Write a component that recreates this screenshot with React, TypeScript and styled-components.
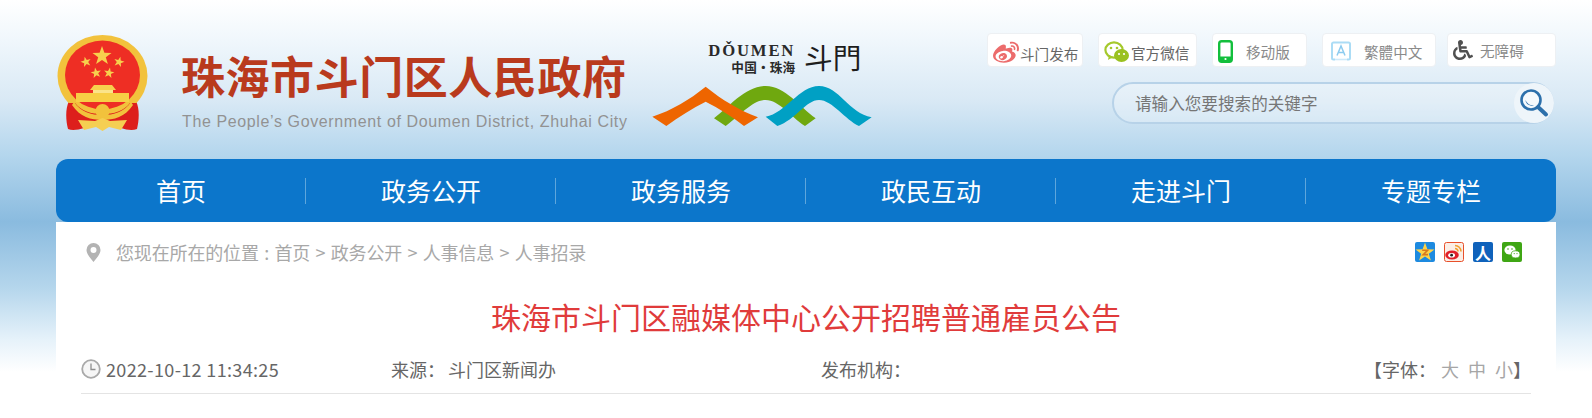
import React from 'react'
import { FaWeibo, FaWheelchair } from 'react-icons/fa'
import styled, { createGlobalStyle } from 'styled-components'

const FONT = `"Noto Sans CJK SC", "Noto Sans", sans-serif`

const GlobalStyle = createGlobalStyle`
  html, body {
    margin: 0;
    padding: 0;
    height: 418px;
    overflow: hidden;
    background: #fff;
    font-family: ${FONT};
  }
`

const Page = styled.div`
  height: 418px;
  overflow: hidden;
  background: linear-gradient(
    180deg,
    #ffffff 0,
    #f0f7fc 40px,
    #d9e9f5 100px,
    #b4d6ed 155px,
    #8abbdf 222px,
    #b5d6ec 288px,
    #e6f2fa 340px,
    #ffffff 372px
  );
`

const Main = styled.div`
  width: 1500px;
  margin-left: 56px;
`

const Header = styled.header`
  display: flex;
  align-items: flex-start;
  height: 159px;
`

const Emblem = styled.svg`
  flex: none;
  width: 91px;
  height: 97px;
  margin: 35px 0 0 1px;
`

const Brand = styled.div`
  flex: none;
  width: 458px;
  margin: 43px 0 0 33px;
`

const BrandName = styled.div`
  color: #b93a1d;
  font-size: 44px;
  font-weight: 700;
  line-height: 64px;
  letter-spacing: 0.55px;
  white-space: nowrap;
`

const BrandEnglish = styled.div`
  margin-top: 5px;
  padding-left: 1px;
  color: #929292;
  font-family: "Liberation Sans", sans-serif;
  font-size: 16px;
  line-height: 20px;
  letter-spacing: 0.62px;
  white-space: nowrap;
`

const CityLogo = styled.svg`
  flex: none;
  width: 260px;
  height: 120px;
  margin: 20px 0 0 0;
`

const Tools = styled.div`
  flex: none;
  width: 569px;
  margin: 33px 0 0 auto;
`

const ToolRow = styled.div`
  display: flex;
  align-items: center;
`

const ToolButton = styled.a<{ $width: number; $gap: number; $top: number; $dim?: boolean }>`
  display: flex;
  align-items: center;
  box-sizing: border-box;
  flex: none;
  width: ${({ $width }) => $width}px;
  height: 34px;
  margin-right: ${({ $gap }) => $gap}px;
  padding-top: ${({ $top }) => $top}px;
  padding-left: ${({ $gap }) => ($gap === 11 ? 8 : 5)}px;
  border: 1px solid #edf0f3;
  border-radius: 4px;
  background: #fff;
  color: ${({ $dim }) => ($dim ? '#8a8a8a' : '#666')};
  font-size: 14.6px;
  white-space: nowrap;
`

const ToolIcon = styled.span<{ $space: number; $color?: string }>`
  display: inline-flex;
  flex: none;
  margin-right: ${({ $space }) => $space}px;
  color: ${({ $color }) => $color || 'inherit'};
`

const SearchBox = styled.div`
  display: flex;
  align-items: center;
  box-sizing: border-box;
  width: 442px;
  height: 42px;
  margin: 15px 0 0 125px;
  padding-left: 21px;
  border: 2px solid #b7d2e8;
  border-radius: 21px;
  background: rgba(255, 255, 255, 0.25);
  position: relative;
`

const SearchText = styled.span`
  color: #767676;
  font-size: 16.6px;
  white-space: nowrap;
`

const SearchButton = styled.span`
  position: absolute;
  top: -1px;
  right: -2px;
  display: flex;
  align-items: center;
  justify-content: center;
  width: 40px;
  height: 40px;
  border-radius: 50%;
  background: #eef5fa;
`

const Nav = styled.nav`
  display: flex;
  height: 63px;
  border-radius: 12px;
  background: #0c76cb;
`

const NavItem = styled.a`
  position: relative;
  flex: 1;
  color: #fff;
  font-size: 25px;
  line-height: 62px;
  text-align: center;

  &:not(:last-child)::after {
    content: '';
    position: absolute;
    top: 19px;
    right: 0;
    width: 1px;
    height: 26px;
    background: #5ea6dc;
  }
`

const Card = styled.section`
  box-sizing: border-box;
  height: 197px;
  padding: 0 25px;
  background: #fff;
`

const CrumbRow = styled.div`
  display: flex;
  align-items: center;
  justify-content: space-between;
  height: 20px;
  padding: 20px 9px 0 5px;
`

const Crumbs = styled.div`
  display: flex;
  align-items: center;
  color: #a8a8a8;
  font-size: 18px;
  line-height: 20px;
  letter-spacing: -0.15px;
  word-spacing: 1.5px;
  white-space: pre;
`

const PinIcon = styled.svg`
  width: 15px;
  height: 19px;
  margin-right: 15px;
`

const ShareList = styled.div`
  display: flex;
  gap: 9px;
`

const ShareIcon = styled.svg`
  display: block;
  width: 20px;
  height: 20px;
`

const RenrenBadge = styled.span`
  display: block;
  width: 20px;
  height: 20px;
  border-radius: 2px;
  background: #0f62bb;
  color: #fff;
  font-size: 16px;
  font-weight: 700;
  line-height: 20px;
  text-align: center;
`

const ArticleTitle = styled.h1`
  margin: 32px 0 0;
  color: #e03b3b;
  font-size: 30px;
  font-weight: 400;
  line-height: 44px;
  text-align: center;
  white-space: nowrap;
`

const MetaRow = styled.div`
  display: flex;
  align-items: center;
  height: 40px;
  margin-top: 11px;
  padding-bottom: 4px;
  border-bottom: 1px solid #e4e4e4;
  color: #666;
  font-size: 18px;
  white-space: nowrap;
`

const MetaCell = styled.span<{ $width?: number }>`
  display: flex;
  align-items: center;
  flex: none;
  width: ${({ $width }) => ($width ? `${$width}px` : 'auto')};
`

const DateText = styled.span`
  letter-spacing: 0.35px;
`

const ClockIcon = styled.svg`
  width: 20px;
  height: 20px;
  margin-right: 5px;
`

const SourceValue = styled.span`
  margin-left: 3px;
`

const FontControls = styled.span`
  margin-left: auto;
`

const FontSize = styled.a`
  margin-left: 9px;
  color: #a6a6a6;

  &:first-of-type {
    margin-left: 5px;
  }
`

const NAV_ITEMS = ['首页', '政务公开', '政务服务', '政民互动', '走进斗门', '专题专栏']

const star = (cx: number, cy: number, r: number, rot = 0) => {
  const pts: string[] = []
  for (let i = 0; i < 10; i++) {
    const rad = i % 2 === 0 ? r : r * 0.4
    const a = (-90 + rot + i * 36) * (Math.PI / 180)
    pts.push(`${(cx + rad * Math.cos(a)).toFixed(1)},${(cy + rad * Math.sin(a)).toFixed(1)}`)
  }
  return pts.join(' ')
}

const NationalEmblem = () => (
  <Emblem viewBox="0 0 91 97">
    <path d="M12 66 C8 74 9 86 11 94 C18 97 30 92 37 90 L54 90 C62 92 72 97 80 94 C82 86 83 74 79 66 Z" fill="#dd1f1c" />
    <ellipse cx="45.5" cy="41" rx="45" ry="41" fill="#f2c23c" />
    <ellipse cx="45.5" cy="40" rx="37.5" ry="34.5" fill="#ee2e24" />
    <polygon points={star(45, 21, 10)} fill="#f7d04d" />
    <polygon points={star(29, 27, 5.5, -15)} fill="#f7d04d" />
    <polygon points={star(62, 27, 5.5, 15)} fill="#f7d04d" />
    <polygon points={star(39, 38, 5.5, -10)} fill="#f7d04d" />
    <polygon points={star(52, 38, 5.5, 10)} fill="#f7d04d" />
    <path d="M33 55 L37 50 H55 L59 55 Z" fill="#f7d04d" />
    <rect x="36" y="55" width="20" height="3" fill="#fbe48a" />
    <rect x="19" y="58" width="53" height="9" fill="#f7cf45" />
    <path d="M12 68 L18 68 C24 76 34 79 45.5 79 C57 79 67 76 73 68 L79 68 L80 74 L45.5 85 L11 74 Z" fill="#dd1f1c" />
    <path d="M17 67 C24 77 34 80 45.5 80 C57 80 67 77 74 67 L76 70 C68 82 57 85 45.5 85 C34 85 23 82 15 70 Z" fill="#f2c23c" />
    <circle cx="45.5" cy="76" r="7" fill="#f2c23c" />
    <path d="M21 85 L38 86 L45.5 83 L53 86 L70 85 L64 95 L52 92 L45.5 96 L39 92 L27 95 Z" fill="#f5cf52" />
  </Emblem>
)

const DoumenLogo = () => (
  <CityLogo viewBox="0 0 780 360">
    <text x="208" y="108" fontFamily="Liberation Serif, serif" fontWeight="700" fontSize="50" letterSpacing="5.5" fill="#2a2a2a">
      DǑUMEN
    </text>
    <text x="277" y="157" fontFamily={FONT} fontWeight="700" fontSize="38" letterSpacing="0.5" fill="#2a2a2a">
      中国·珠海
    </text>
    <text x="495" y="148" fontFamily={FONT} fontWeight="400" fontSize="86" fill="#1d1d1d">
      斗門
    </text>
    <path d="M225 295 C270 260 320 198 380 198 C440 198 480 260 530 295 L498 318 C455 290 420 240 380 240 C340 240 300 290 260 318 Z" fill="#6fa80f" />
    <path d="M40 290 C100 270 150 240 200 200 C250 240 300 270 357 292 L315 318 C280 290 240 265 200 245 C160 265 120 290 82 318 Z" fill="#ee6500" />
    <path d="M380 290 C440 280 480 198 540 198 C600 198 630 280 698 292 L660 318 C620 300 580 240 540 240 C500 240 470 300 415 318 Z" fill="#00a0c4" />
  </CityLogo>
)

const WechatBubbles = () => (
  <svg width="26" height="24" viewBox="0 0 26 24">
    <ellipse cx="10" cy="10" rx="8.6" ry="7.6" fill="#fff" stroke="#a5c92c" strokeWidth="2.2" />
    <path d="M5 15 L4 20 L9 17 Z" fill="#a5c92c" />
    <circle cx="7" cy="8" r="1.3" fill="#a5c92c" />
    <circle cx="13" cy="8" r="1.3" fill="#a5c92c" />
    <ellipse cx="17.5" cy="15.5" rx="7.5" ry="6.5" fill="#9ac120" />
    <circle cx="15" cy="14" r="1.1" fill="#fff" />
    <circle cx="20" cy="14" r="1.1" fill="#fff" />
  </svg>
)

const PhoneGlyph = () => (
  <svg width="15" height="23" viewBox="0 0 15 23">
    <rect x="1.2" y="1.2" width="12.6" height="20.6" rx="2.5" fill="#fff" stroke="#12bf3c" strokeWidth="2.4" />
    <rect x="1" y="16.5" width="13" height="5" fill="#12bf3c" />
    <circle cx="7.5" cy="19" r="1.1" fill="#fff" />
  </svg>
)

const LetterBox = () => (
  <svg width="20" height="20" viewBox="0 0 20 20">
    <path d="M4 18.5 H2.5 A1.5 1.5 0 0 1 1 17 V3 A1.5 1.5 0 0 1 2.5 1.5 H17.5 A1.5 1.5 0 0 1 19 3 V17 A1.5 1.5 0 0 1 17.5 18.5 H16" fill="none" stroke="#abdcf5" strokeWidth="2" />
    <path d="M6 14.5 L10 5 L14 14.5 M7.4 11.5 H12.6" fill="none" stroke="#8ccbef" strokeWidth="1.5" />
    <path d="M4 18.5 H16" stroke="#cfeafa" strokeWidth="1.6" />
  </svg>
)

const Magnifier = () => (
  <svg width="30" height="30" viewBox="0 0 30 30">
    <circle cx="12" cy="12" r="9.5" fill="#f5f9fc" stroke="#2d70ab" strokeWidth="2.6" />
    <path d="M6.5 12 A6 6 0 0 0 15 17.2 A7.5 7.5 0 0 1 6.5 12 Z" fill="#2d70ab" />
    <path d="M19 19 L27 26.5" stroke="#2d70ab" strokeWidth="4" strokeLinecap="round" />
  </svg>
)

const Pin = () => (
  <PinIcon viewBox="0 0 15 19">
    <path fillRule="evenodd" d="M7.5 0 A7 7 0 0 1 14.5 7 C14.5 11 10 16 7.5 19 C5 16 0.5 11 0.5 7 A7 7 0 0 1 7.5 0 Z M7.5 4 A3 3 0 1 0 7.5 10 A3 3 0 1 0 7.5 4 Z" fill="#b3b3b3" />
  </PinIcon>
)

const QzoneIcon = () => (
  <ShareIcon viewBox="0 0 20 20">
    <rect width="20" height="20" rx="2" fill="#1d8ae0" />
    <polygon points={star(10, 10.5, 10)} fill="#fcd34a" />
    <path d="M7.2 8.3 H12.6 L8.2 12.6 H13" fill="none" stroke="#d8791c" strokeWidth="1.6" />
  </ShareIcon>
)

const WeiboIcon = () => (
  <ShareIcon viewBox="0 0 20 20">
    <rect x="0.5" y="0.5" width="19" height="19" rx="2" fill="#fbeee6" stroke="#e8502a" />
    <ellipse cx="8" cy="13" rx="6.8" ry="4.6" fill="#e0202a" />
    <ellipse cx="7.6" cy="13.2" rx="3.4" ry="2.3" fill="#fff" />
    <circle cx="7.6" cy="13.2" r="1.4" fill="#222" />
    <path d="M11 3.5 A6 6 0 0 1 17 9.5 M11 6.5 A3 3 0 0 1 14 9.5" fill="none" stroke="#f0a030" strokeWidth="1.6" />
  </ShareIcon>
)

const WechatShareIcon = () => (
  <ShareIcon viewBox="0 0 20 20">
    <rect width="20" height="20" rx="2" fill="#3fa614" />
    <ellipse cx="8" cy="8" rx="5.6" ry="4.6" fill="#fff" />
    <ellipse cx="13.6" cy="12.4" rx="4.4" ry="3.6" fill="#fff" stroke="#3fa614" strokeWidth="0.8" />
    <circle cx="6" cy="7" r="0.8" fill="#3fa614" />
    <circle cx="10" cy="7" r="0.8" fill="#3fa614" />
    <circle cx="12.2" cy="11.6" r="0.6" fill="#3fa614" />
    <circle cx="15" cy="11.6" r="0.6" fill="#3fa614" />
  </ShareIcon>
)

const Clock = () => (
  <ClockIcon viewBox="0 0 20 20">
    <circle cx="10" cy="10" r="8.8" fill="#f6f6f6" stroke="#a9a9a9" strokeWidth="1.8" />
    <path d="M10 4.5 V10.5 H14.5" fill="none" stroke="#8f8f8f" strokeWidth="1.3" />
  </ClockIcon>
)

export default function App() {
  return (
    <Page>
      <GlobalStyle />
      <Main>
        <Header>
          <NationalEmblem />
          <Brand>
            <BrandName>珠海市斗门区人民政府</BrandName>
            <BrandEnglish>The People&rsquo;s Government of Doumen District, Zhuhai City</BrandEnglish>
          </Brand>
          <DoumenLogo />
          <Tools>
            <ToolRow>
              <ToolButton $width={96} $gap={15} $top={6}>
                <ToolIcon $space={1} $color="#ec6c6c">
                  <FaWeibo size={26} />
                </ToolIcon>
                斗门发布
              </ToolButton>
              <ToolButton $width={99} $gap={15} $top={4}>
                <ToolIcon $space={1}>
                  <WechatBubbles />
                </ToolIcon>
                官方微信
              </ToolButton>
              <ToolButton $width={95} $gap={15} $top={2} $dim>
                <ToolIcon $space={13}>
                  <PhoneGlyph />
                </ToolIcon>
                移动版
              </ToolButton>
              <ToolButton $width={114} $gap={11} $top={2} $dim>
                <ToolIcon $space={13}>
                  <LetterBox />
                </ToolIcon>
                繁體中文
              </ToolButton>
              <ToolButton $width={109} $gap={0} $top={0} $dim>
                <ToolIcon $space={7} $color="#505050">
                  <FaWheelchair size={20} />
                </ToolIcon>
                无障碍
              </ToolButton>
            </ToolRow>
            <SearchBox>
              <SearchText>请输入您要搜索的关键字</SearchText>
              <SearchButton>
                <Magnifier />
              </SearchButton>
            </SearchBox>
          </Tools>
        </Header>
        <Nav>
          {NAV_ITEMS.map((item) => (
            <NavItem key={item}>{item}</NavItem>
          ))}
        </Nav>
        <Card>
          <CrumbRow>
            <Crumbs>
              <Pin />
              您现在所在的位置 : 首页 &gt; 政务公开 &gt; 人事信息 &gt; 人事招录
            </Crumbs>
            <ShareList>
              <QzoneIcon />
              <WeiboIcon />
              <RenrenBadge>人</RenrenBadge>
              <WechatShareIcon />
            </ShareList>
          </CrumbRow>
          <ArticleTitle>珠海市斗门区融媒体中心公开招聘普通雇员公告</ArticleTitle>
          <MetaRow>
            <MetaCell $width={310}>
              <Clock />
              <DateText>2022-10-12 11:34:25</DateText>
            </MetaCell>
            <MetaCell $width={430}>
              来源：<SourceValue>斗门区新闻办</SourceValue>
            </MetaCell>
            <MetaCell>发布机构：</MetaCell>
            <FontControls>
              【字体：
              <FontSize>大</FontSize>
              <FontSize>中</FontSize>
              <FontSize>小</FontSize>】
            </FontControls>
          </MetaRow>
        </Card>
      </Main>
    </Page>
  )
}
